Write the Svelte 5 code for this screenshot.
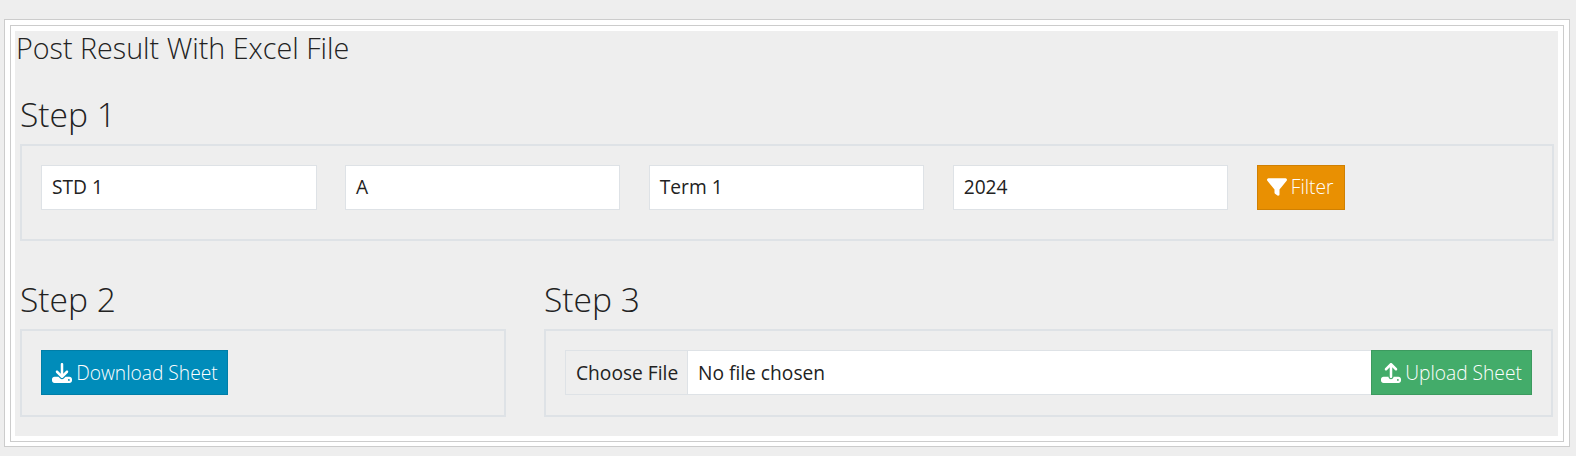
<script>
  const fields = ['STD 1', 'A', 'Term 1', '2024'];
</script>

<main class="frame">
  <div class="frame-inner">
    <div class="content">
      <h1>Post Result With Excel File</h1>

      <section class="step">
        <h2>Step 1</h2>
        <div class="panel filters">
          {#each fields as value}
            <div class="field">{value}</div>
          {/each}
          <button class="btn filter">
            <svg viewBox="0 0 512 512" width="20" height="20"><path d="M3.900 54.900C10.500 40.900 24.500 32 40 32H472c15.500 0 29.500 8.900 36.100 22.900s4.600 30.500-5.200 42.500L320 320.900V448c0 12.100-6.800 23.200-17.700 28.600s-23.800 4.300-33.500-3l-64-48c-8.100-6-12.800-15.500-12.800-25.600V320.900L9 97.300C-.7 85.400-2.800 68.800 3.900 54.900z" /></svg>
            <span>Filter</span>
          </button>
        </div>
      </section>

      <div class="row">
        <section class="step download">
          <h2>Step 2</h2>
          <div class="panel">
            <button class="btn primary">
              <svg viewBox="0 0 512 512" width="20" height="20"><path d="M288 32c0-17.700-14.300-32-32-32s-32 14.300-32 32V274.700l-73.400-73.400c-12.500-12.500-32.800-12.500-45.300 0s-12.500 32.800 0 45.300l128 128c12.500 12.500 32.800 12.500 45.300 0l128-128c12.500-12.500 12.500-32.800 0-45.300s-32.800-12.500-45.300 0L288 274.700V32zM64 352c-35.300 0-64 28.700-64 64v32c0 35.300 28.700 64 64 64H448c35.300 0 64-28.700 64-64V416c0-35.300-28.700-64-64-64H346.500l-45.300 45.300c-25 25-65.500 25-90.500 0L165.500 352H64zm368 56a24 24 0 1 1 0 48 24 24 0 1 1 0-48z" /></svg>
              <span>Download Sheet</span>
            </button>
          </div>
        </section>

        <section class="step upload">
          <h2>Step 3</h2>
          <div class="panel">
            <div class="file">
              <span class="choose">Choose File</span>
              <span class="name">No file chosen</span>
            </div>
            <button class="btn success">
              <svg viewBox="0 0 512 512" width="20" height="20"><path d="M288 109.300V352c0 17.700-14.300 32-32 32s-32-14.300-32-32V109.300l-73.400 73.400c-12.500 12.500-32.800 12.500-45.300 0s-12.500-32.800 0-45.300l128-128c12.500-12.500 32.800-12.500 45.300 0l128 128c12.500 12.500 12.500 32.800 0 45.300s-32.800 12.500-45.300 0L288 109.300zM64 352H192c0 35.300 28.700 64 64 64s64-28.700 64-64H448c35.300 0 64 28.700 64 64v32c0 35.300-28.700 64-64 64H64c-35.300 0-64-28.700-64-64V416c0-35.300 28.700-64 64-64zM432 456a24 24 0 1 0 0-48 24 24 0 1 0 0 48z" /></svg>
              <span>Upload Sheet</span>
            </button>
          </div>
        </section>
      </div>
    </div>
  </div>
</main>

<style>
  :global(body) {
    background: #eee;
  }
  :global(#app) {
    display: flow-root;
  }
  * {
    box-sizing: border-box;
  }
  .frame {
    width: 1566px;
    height: 428px;
    margin: 19px 0 0 4px;
    padding: 5px 5px 4px;
    border: 1px solid #ccc;
    background: #fff;
    font-family: 'Open Sans', sans-serif;
    font-size: 19.2px;
    line-height: 31px;
    color: #222;
  }
  .frame-inner {
    height: 417px;
    padding: 5px 5px 5px 4px;
    border: 1px solid #ccc;
  }
  .content {
    height: 405px;
    background: #eee;
  }
  h1,
  h2 {
    margin: 0;
    font-weight: 300;
  }
  h1 {
    padding-left: 1px;
    font-size: 28.7px;
    line-height: 33px;
    height: 63px;
  }
  h2 {
    height: 50px;
    font-size: 33.6px;
    line-height: 41px;
  }
  .step {
    margin-left: 5px;
  }
  .panel {
    display: flex;
    align-items: flex-start;
    height: 88px;
    padding: 19px;
    border: 2px solid #dee2e6;
  }
  .filters {
    width: 1534px;
    height: 97px;
    gap: 28.35px;
  }
  .field {
    width: 275.55px;
    height: 45px;
    padding: 5px 10px;
    border: 1px solid #dee2e6;
    background: #fff;
  }
  .row {
    display: flex;
    margin-top: 38px;
  }
  .download {
    width: 486px;
  }
  .upload {
    width: 1009px;
    margin-left: 38px;
  }
  .btn {
    display: flex;
    align-items: center;
    gap: 4.2px;
    height: 45px;
    padding: 0 9px;
    border: 1px solid;
    color: #fff;
    font: 300 19.2px/31px 'Open Sans', sans-serif;
    white-space: nowrap;
  }
  .btn svg {
    flex: none;
    fill: currentColor;
  }
  .filter {
    width: 88px;
    padding-bottom: 2px;
    background: #e99002;
    border-color: #d08002;
  }
  .primary {
    width: 187px;
    padding-left: 10px;
    background: #008cba;
    border-color: #007ea7;
  }
  .success {
    width: 161px;
    background: #43ac6a;
    border-color: #3c9a5f;
  }
  .file {
    display: flex;
    flex: 1;
    height: 45px;
    border: 1px solid #dee2e6;
    border-right: 0;
    background: #fff;
  }
  .choose {
    width: 122px;
    padding: 6px 0 6px 10px;
    border-right: 1px solid #dee2e6;
    background: #eee;
  }
  .name {
    padding: 6px 10px;
  }
</style>
